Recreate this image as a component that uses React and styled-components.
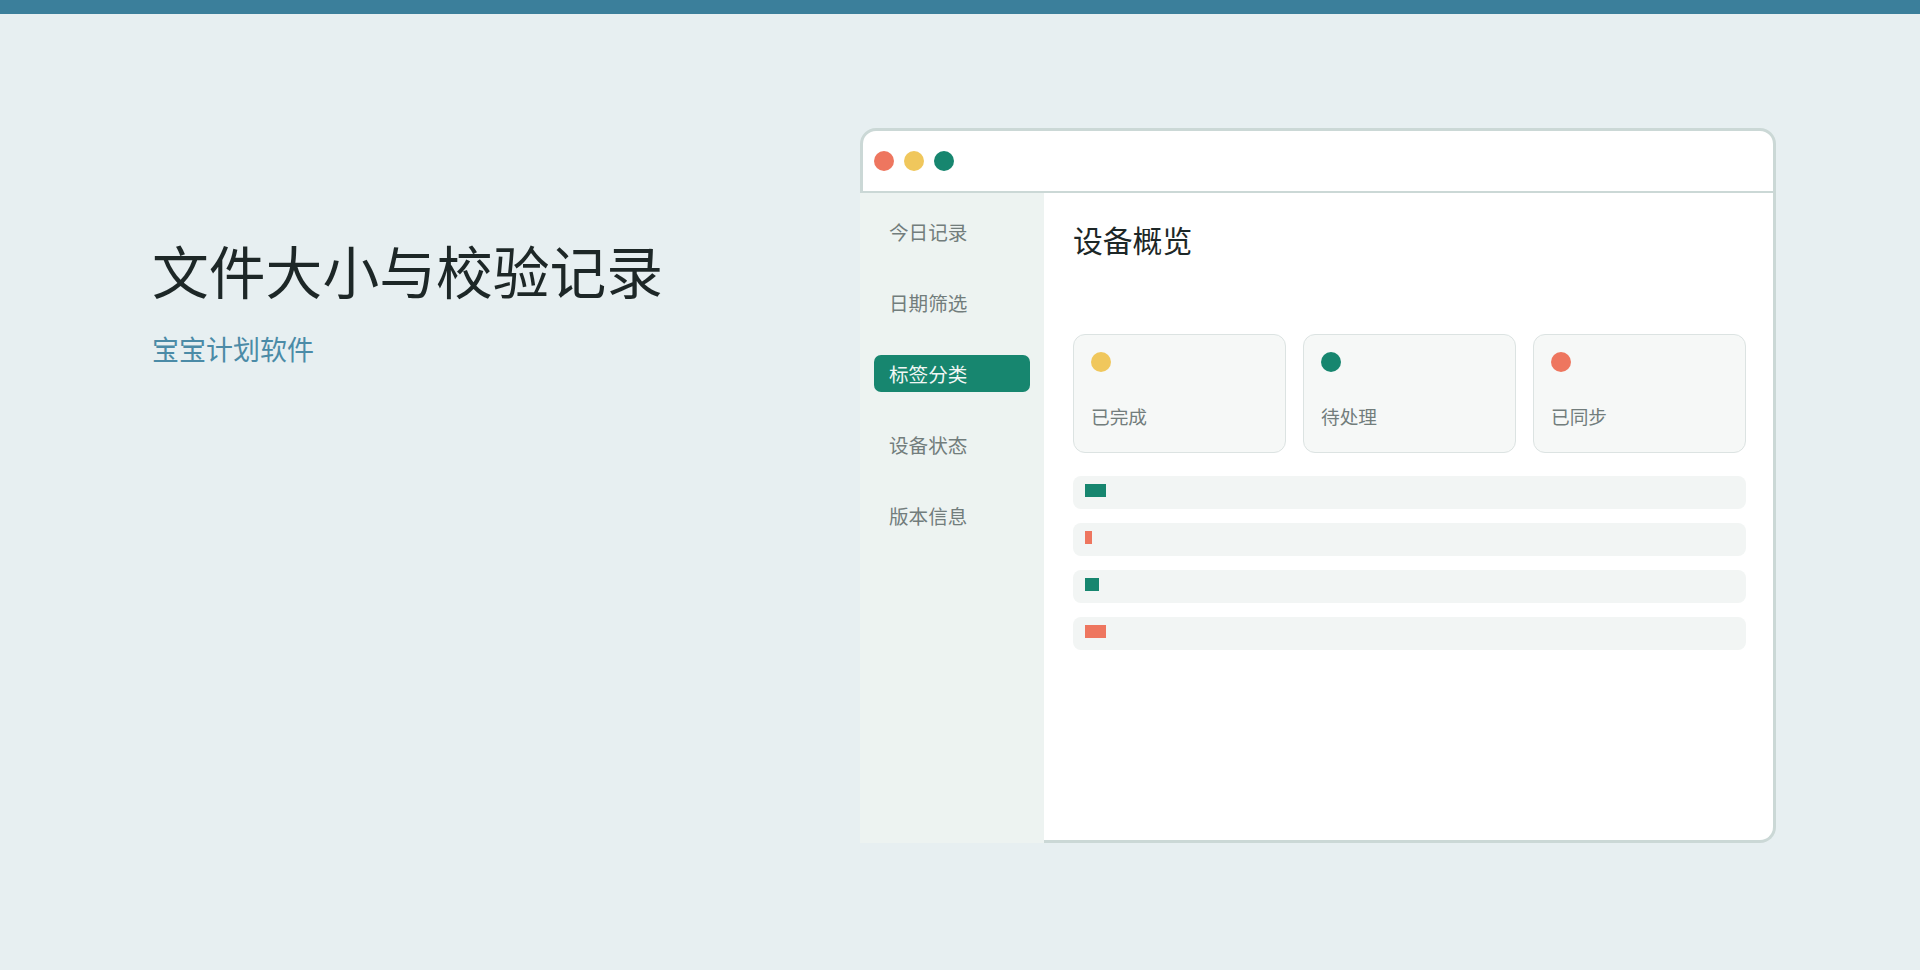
import React from "react";
import styled, { createGlobalStyle } from "styled-components";

const C = {
  page: "#e7eff1",
  topbar: "#3b7f9b",
  border: "#cbd8d6",
  sidebar: "#edf3f1",
  green: "#17866f",
  coral: "#ee765f",
  yellow: "#f0c75c",
  title: "#1d2727",
  subtitle: "#4b8ba7",
  muted: "#727d7c",
  cardBg: "#f6f8f7",
  cardBorder: "#dce3e2",
  rowBg: "#f2f5f4",
};

const Global = createGlobalStyle`
  html, body {
    margin: 0;
    padding: 0;
    background: ${C.page};
  }
  body {
    font-family: "Noto Sans CJK SC", "Noto Sans", sans-serif;
    min-height: 970px;
  }
  * { box-sizing: border-box; }
`;

const Page = styled.div`
  min-height: 970px;
  background: ${C.page};
`;

const TopBar = styled.div`
  height: 14px;
  background: ${C.topbar};
`;

const Stage = styled.div`
  display: flex;
  justify-content: space-between;
  align-items: flex-start;
  padding: 114px 144px 0 152px;
`;

const Intro = styled.div`
  display: flex;
  flex-direction: column;
  padding-top: 108px;
`;

const Title = styled.h1`
  margin: 0;
  font-size: 56.8px;
  line-height: 67px;
  font-weight: 400;
  color: ${C.title};
  white-space: nowrap;
`;

const Subtitle = styled.div`
  margin-top: 26px;
  font-size: 27px;
  line-height: 40px;
  color: ${C.subtitle};
  white-space: nowrap;
`;

const Window = styled.div`
  width: 916px;
  display: flex;
  flex-direction: column;
`;

const TitleBar = styled.div`
  height: 65px;
  background: #fff;
  border: 3px solid ${C.border};
  border-bottom-width: 2px;
  border-radius: 16px 16px 0 0;
  display: flex;
  align-items: center;
  gap: 10px;
  padding-left: 11px;
`;

const Light = styled.span`
  width: 20px;
  height: 20px;
  border-radius: 50%;
  background: ${(p) => p.$c};
`;

const Body = styled.div`
  display: grid;
  grid-template-columns: 184px 1fr;
  height: 650px;
`;

const Sidebar = styled.nav`
  background: ${C.sidebar};
  display: flex;
  flex-direction: column;
  gap: 34px;
  padding: 20px 14px 0;
`;

const NavItem = styled.div`
  height: 37px;
  display: flex;
  align-items: center;
  padding-left: 15px;
  border-radius: 7px;
  font-size: 19.6px;
  color: ${(p) => (p.$active ? "#f1f7f5" : C.muted)};
  background: ${(p) => (p.$active ? C.green : "transparent")};
  white-space: nowrap;
`;

const Main = styled.main`
  background: #fff;
  border-right: 3px solid ${C.border};
  border-bottom: 3px solid ${C.border};
  border-bottom-right-radius: 16px;
  padding: 25px 27px 0 29px;
  display: flex;
  flex-direction: column;
`;

const Heading = styled.h2`
  margin: 0;
  font-size: 29.8px;
  line-height: 42px;
  font-weight: 400;
  color: ${C.title};
`;

const Cards = styled.div`
  margin-top: 74px;
  display: grid;
  grid-template-columns: repeat(3, 1fr);
  gap: 17px;
`;

const Card = styled.div`
  background: ${C.cardBg};
  border: 1px solid ${C.cardBorder};
  border-radius: 12px;
  padding: 17px 17px 22px;
  display: flex;
  flex-direction: column;
  align-items: flex-start;
`;

const Dot = styled.span`
  width: 20px;
  height: 20px;
  border-radius: 50%;
  background: ${(p) => p.$c};
`;

const CardLabel = styled.div`
  margin-top: 30px;
  font-size: 18.7px;
  line-height: 28px;
  color: ${C.muted};
`;

const Rows = styled.div`
  margin-top: 23px;
  display: flex;
  flex-direction: column;
  gap: 14px;
`;

const Row = styled.div`
  height: 33px;
  background: ${C.rowBg};
  border-radius: 8px;
  padding: 8px 12px;
  display: flex;
  align-items: flex-start;
`;

const Bar = styled.span`
  height: 13px;
  width: ${(p) => p.$w}px;
  background: ${(p) => p.$c};
`;

const nav = ["今日记录", "日期筛选", "标签分类", "设备状态", "版本信息"];
const cards = [
  { label: "已完成", color: C.yellow },
  { label: "待处理", color: C.green },
  { label: "已同步", color: C.coral },
];
const bars = [
  { w: 21, c: C.green },
  { w: 7, c: C.coral },
  { w: 14, c: C.green },
  { w: 21, c: C.coral },
];

export default function App() {
  return (
    <Page>
      <Global />
      <TopBar />
      <Stage>
        <Intro>
          <Title>文件大小与校验记录</Title>
          <Subtitle>宝宝计划软件</Subtitle>
        </Intro>
        <Window>
          <TitleBar>
            <Light $c={C.coral} />
            <Light $c={C.yellow} />
            <Light $c={C.green} />
          </TitleBar>
          <Body>
            <Sidebar>
              {nav.map((n) => (
                <NavItem key={n} $active={n === "标签分类"}>
                  {n}
                </NavItem>
              ))}
            </Sidebar>
            <Main>
              <Heading>设备概览</Heading>
              <Cards>
                {cards.map((c) => (
                  <Card key={c.label}>
                    <Dot $c={c.color} />
                    <CardLabel>{c.label}</CardLabel>
                  </Card>
                ))}
              </Cards>
              <Rows>
                {bars.map((b, i) => (
                  <Row key={i}>
                    <Bar $w={b.w} $c={b.c} />
                  </Row>
                ))}
              </Rows>
            </Main>
          </Body>
        </Window>
      </Stage>
    </Page>
  );
}
